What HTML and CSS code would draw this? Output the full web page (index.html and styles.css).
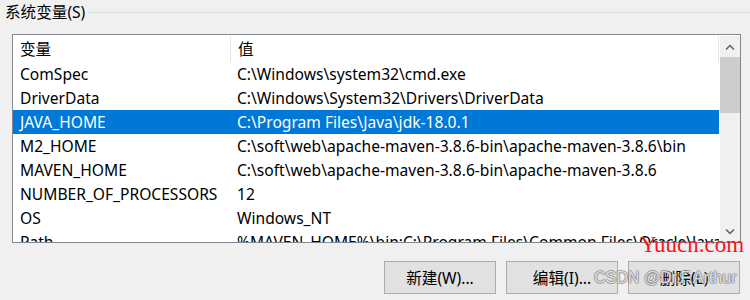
FILE: index.html
```html
<!DOCTYPE html>
<html lang="zh-CN">
<head>
  <meta charset="UTF-8">
  <title>系统变量</title>
  <link rel="stylesheet" href="styles.css">
</head>
<body>
  <div class="panel">
    <div class="group-title">
      <span class="title-text">系统变量(S)</span>
      <span class="title-line"></span>
    </div>

    <div class="listbox">
      <div class="list">
        <div class="row head">
          <div class="cell name">变量</div>
          <div class="cell value">值</div>
        </div>
        <div class="row"><div class="cell name">ComSpec</div><div class="cell value">C:\Windows\system32\cmd.exe</div></div>
        <div class="row"><div class="cell name">DriverData</div><div class="cell value">C:\Windows\System32\Drivers\DriverData</div></div>
        <div class="row selected"><div class="cell name">JAVA_HOME</div><div class="cell value">C:\Program Files\Java\jdk-18.0.1</div></div>
        <div class="row"><div class="cell name">M2_HOME</div><div class="cell value">C:\soft\web\apache-maven-3.8.6-bin\apache-maven-3.8.6\bin</div></div>
        <div class="row"><div class="cell name">MAVEN_HOME</div><div class="cell value">C:\soft\web\apache-maven-3.8.6-bin\apache-maven-3.8.6</div></div>
        <div class="row"><div class="cell name">NUMBER_OF_PROCESSORS</div><div class="cell value">12</div></div>
        <div class="row"><div class="cell name">OS</div><div class="cell value">Windows_NT</div></div>
        <div class="row"><div class="cell name">Path</div><div class="cell value">%MAVEN_HOME%\bin;C:\Program Files\Common Files\Oracle\Java\javapath;</div></div>
      </div>
      <div class="scrollbar">
        <div class="arrow">
          <svg width="10" height="6" viewBox="0 0 10 6"><path d="M1 5.5 L5 1.5 L9 5.5" fill="none" stroke="#606060" stroke-width="1.5"/></svg>
        </div>
        <div class="track">
          <div class="thumb"></div>
        </div>
        <div class="arrow">
          <svg width="10" height="6" viewBox="0 0 10 6"><path d="M1 0.5 L5 4.5 L9 0.5" fill="none" stroke="#606060" stroke-width="1.5"/></svg>
        </div>
      </div>
    </div>

    <div class="buttons">
      <button type="button">新建(W)...</button>
      <button type="button">编辑(I)...</button>
      <button type="button">删除(L)</button>
    </div>
  </div>

  <div class="mark-site">Yuucn.com</div>
  <div class="mark-csdn">CSDN @Dr.F.Arthur</div>
</body>
</html>
```

FILE: styles.css
```css
body {
  margin: 0;
  background: #f0f0f0;
  font-family: "Noto Sans", "Noto Sans CJK SC", sans-serif;
  font-size: 15.6px;
  color: #000;
  width: 750px;
  height: 300px;
  overflow: hidden;
  position: relative;
}
.panel {
  padding-top: 2px;
}
.group-title {
  display: flex;
  align-items: center;
  height: 20px;
  padding-left: 5px;
}
.title-text {
  line-height: 20px;
  padding-right: 3px;
}
.title-line {
  flex: 1;
  border-top: 1px solid #dcdcdc;
}
.listbox {
  display: flex;
  margin: 12px 0 0 12px;
  width: 727px;
  height: 206px;
  padding: 1px 0 0 0;
  border: 1px solid #828790;
  background: #fff;
  box-sizing: content-box;
}
.list {
  width: 706px;
  height: 206px;
  overflow: hidden;
}
.row {
  display: flex;
  height: 24px;
  line-height: 24px;
  white-space: nowrap;
}
.row.head {
  height: 26px;
  line-height: 26px;
  border-right: 1px solid #e5e5e5;
  width: 705px;
}
.cell {
  overflow: hidden;
}
.name {
  width: 210px;
  padding-left: 7px;
  flex-shrink: 0;
}
.head .name {
  border-right: 1px solid #e5e5e5;
}
.value {
  padding-left: 7px;
}
.row.selected {
  background: #0078d7;
  color: #fff;
}
.scrollbar {
  width: 20px;
  margin-left: 1px;
  display: flex;
  flex-direction: column;
  background: #f0f0f0;
}
.arrow {
  height: 21px;
  display: flex;
  align-items: center;
  justify-content: center;
}
.track {
  flex: 1;
}
.thumb {
  height: 56px;
  background: #cdcdcd;
}
.buttons {
  display: flex;
  justify-content: flex-end;
  gap: 10px;
  margin-top: 18px;
  padding-right: 10px;
}
button {
  width: 112px;
  height: 33px;
  background: #e1e1e1;
  border: 1px solid #adadad;
  font-family: "Noto Sans", "Noto Sans CJK SC", sans-serif;
  font-size: 15.6px;
  color: #000;
  padding: 0;
}
.mark-site {
  position: absolute;
  left: 640px;
  top: 232px;
  white-space: nowrap;
  font-family: "Liberation Serif", serif;
  font-size: 23px;
  color: #ff1020;
}
.mark-csdn {
  position: absolute;
  left: 594px;
  top: 269px;
  white-space: nowrap;
  font-family: "Liberation Sans", sans-serif;
  font-size: 16px;
  color: rgba(235, 235, 235, 0.9);
  text-shadow: 1px 0 0 rgba(120, 120, 120, 0.6), -1px 0 0 rgba(120, 120, 120, 0.6), 0 1px 0 rgba(120, 120, 120, 0.6), 0 -1px 0 rgba(120, 120, 120, 0.6);
}
```
